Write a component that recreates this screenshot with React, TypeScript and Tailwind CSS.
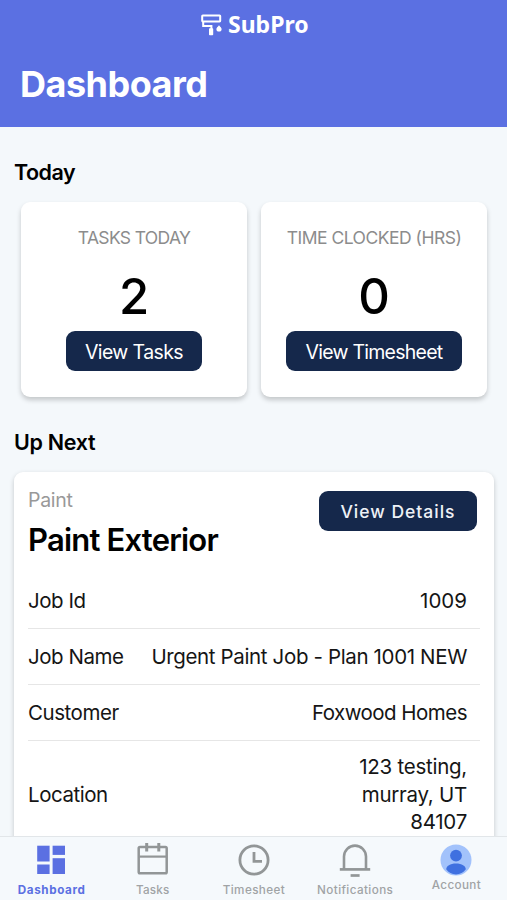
import type { ReactNode } from "react";

interface Stat {
  label: string;
  value: string;
  action: string;
  labelClass: string;
  buttonClass: string;
}

const stats: Stat[] = [
  {
    label: "TASKS TODAY",
    value: "2",
    action: "View Tasks",
    labelClass: "tracking-[-0.65px]",
    buttonClass: "w-[136px] tracking-[-0.6px]",
  },
  {
    label: "TIME CLOCKED (HRS)",
    value: "0",
    action: "View Timesheet",
    labelClass: "tracking-[-0.5px]",
    buttonClass: "w-[176px] tracking-[-0.75px]",
  },
];

const details = [
  { label: "Job Id", lines: ["1009"], valueClass: "tracking-[0px]", rowClass: "pt-[14px]" },
  {
    label: "Job Name",
    lines: ["Urgent Paint Job - Plan 1001 NEW"],
    valueClass: "tracking-[-0.36px]",
    rowClass: "pt-[14px]",
  },
  { label: "Customer", lines: ["Foxwood Homes"], valueClass: "tracking-[-0.52px]", rowClass: "pt-[14px]" },
  {
    label: "Location",
    lines: ["123 testing,", "murray, UT", "84107"],
    valueClass: "tracking-[-0.25px]",
    rowClass: "pt-[12px]",
  },
];

function RollerIcon() {
  return (
    <svg width="21" height="22" viewBox="0 0 21 22" fill="none" stroke="white" strokeWidth="2">
      <rect x="1.2" y="1.4" width="18" height="6" rx="0.6" />
      <path d="M2.2 7.5v4.6h8.2v3" />
      <rect x="8" y="14.2" width="4.2" height="7" rx="0.8" fill="white" stroke="none" />
      <path d="M18 11.2c1.4 1.7 2.6 2.6 2.6 3.8a2.6 2.6 0 0 1-5.2 0c0-1.2 1.2-2.1 2.6-3.8z" fill="white" stroke="none" />
    </svg>
  );
}

function DashboardIcon() {
  return (
    <svg width="34" height="34" viewBox="0 0 34 34" fill="#5b70e2">
      <rect x="2.2" y="2.7" width="12.4" height="15.8" />
      <rect x="17.6" y="2.7" width="12.4" height="9.2" />
      <rect x="2.2" y="21.5" width="12.4" height="9.5" />
      <rect x="17.6" y="15.2" width="12.4" height="15.8" />
    </svg>
  );
}

function CalendarIcon() {
  return (
    <svg width="34" height="34" viewBox="0 0 34 34" fill="none" stroke="#929697">
      <rect x="2.7" y="4" width="28" height="26.2" rx="1.3" strokeWidth="2.5" />
      <path d="M2.7 13.6h28" strokeWidth="2.2" />
      <path d="M10.7 0v8.6M22.8 0v8.6" strokeWidth="3" />
    </svg>
  );
}

function ClockIcon() {
  return (
    <svg width="34" height="34" viewBox="0 0 34 34" fill="none" stroke="#929697" strokeWidth="2.8">
      <circle cx="17" cy="17" r="14.1" />
      <path d="M17 9v9.4h8" />
    </svg>
  );
}

function BellIcon() {
  return (
    <svg width="34" height="34" viewBox="0 0 34 34" fill="none" stroke="#929697">
      <path d="M6 26V13.6a11 11 0 0 1 22 0V26" strokeWidth="2.6" />
      <path d="M1.8 26.4h30.4" strokeWidth="2.7" />
      <path d="M12.6 32.5h9" strokeWidth="2.7" />
    </svg>
  );
}

function AccountIcon() {
  return (
    <svg width="34" height="34" viewBox="0 0 34 34">
      <circle cx="17" cy="17" r="15.5" fill="#a2c2fb" />
      <circle cx="17" cy="12.6" r="5.9" fill="#3f70e0" />
      <path d="M7.2 26.300c0-3.500 4-5.900 9.800-5.900s9.800 2.400 9.800 5.900c-2.200 3.300-5.800 5.200-9.800 5.200s-7.600-1.900-9.800-5.200z" fill="#3f70e0" />
    </svg>
  );
}

interface Tab {
  label: string;
  icon: ReactNode;
  className: string;
  labelClass: string;
}

const tabs: Tab[] = [
  {
    label: "Dashboard",
    icon: <DashboardIcon />,
    className: "font-bold text-[#5b70e2]",
    labelClass: "mt-[5px] tracking-[0.6px]",
  },
  {
    label: "Tasks",
    icon: <CalendarIcon />,
    className: "font-medium text-[#a0a3a5]",
    labelClass: "mt-[5px] tracking-[0.2px]",
  },
  {
    label: "Timesheet",
    icon: <ClockIcon />,
    className: "font-medium text-[#a0a3a5]",
    labelClass: "mt-[5px] tracking-[0.4px]",
  },
  {
    label: "Notifications",
    icon: <BellIcon />,
    className: "font-medium text-[#a0a3a5]",
    labelClass: "mt-[5px] tracking-[0.4px]",
  },
  {
    label: "Account",
    icon: <AccountIcon />,
    className: "font-medium text-[#a0a3a5]",
    labelClass: "tracking-[0.35px]",
  },
];

function StatCard({ stat }: { stat: Stat }) {
  return (
    <div className="flex h-[195px] flex-1 flex-col items-center rounded-[9px] bg-white pt-[24px] shadow-[0_3px_5px_rgba(0,0,0,0.2)]">
      <div className={`text-[17.5px] leading-[24px] whitespace-nowrap text-[#8c8c8c] ${stat.labelClass}`}>
        {stat.label}
      </div>
      <div className="mt-[17px] text-[49px] leading-[60px] [font-weight:450]">{stat.value}</div>
      <button
        className={`mt-[4px] h-[40px] rounded-[9px] bg-[#15284b] pt-[3px] text-[19.5px] whitespace-nowrap text-white ${stat.buttonClass}`}
      >
        {stat.action}
      </button>
    </div>
  );
}

export default function App() {
  return (
    <div className="flex h-[900px] w-[507px] flex-col overflow-hidden bg-[#f4f8fb] font-['Inter',sans-serif] text-black">
      <header className="h-[127px] shrink-0 bg-[#5b70e2] text-white">
        <div className="flex h-[50px] items-center gap-[6px] pl-[201px]">
          <RollerIcon />
          <span className="-mt-[2px] font-['Noto_Sans',sans-serif] text-[23px] leading-[30px] font-bold">SubPro</span>
        </div>
        <h1 className="pl-[20px] text-[36px] leading-[68px] font-bold tracking-[-0.5px]">Dashboard</h1>
      </header>

      <main className="min-h-0 flex-1 overflow-hidden">
        <h2 className="pt-[30px] pl-[14px] text-[21.5px] leading-[30px] font-semibold tracking-[-0.5px]">Today</h2>
        <div className="mt-[15px] flex gap-[14px] pr-[20px] pl-[21px]">
          {stats.map((stat) => (
            <StatCard key={stat.label} stat={stat} />
          ))}
        </div>

        <h2 className="mt-[30px] pl-[14px] text-[21.5px] leading-[30px] font-semibold tracking-[-0.3px]">Up Next</h2>
        <section className="mt-[15px] mr-[13px] ml-[14px] h-[420px] rounded-[9px] bg-white shadow-[0_2px_5px_rgba(0,0,0,0.2)]">
          <div className="flex h-[101px] justify-between pr-[17px] pl-[14px]">
            <div className="pt-[16px]">
              <div className="text-[19.5px] leading-[24px] tracking-[-0.3px] text-[#999]">Paint</div>
              <h3 className="mt-[8px] text-[31px] leading-[40px] font-semibold tracking-[-0.8px]">Paint Exterior</h3>
            </div>
            <button className="mt-[19px] h-[40px] w-[158px] rounded-[9px] bg-[#15284b] pt-[2px] text-[17.5px] tracking-[1px] text-[#eef1f6] [font-weight:450]">
              View Details
            </button>
          </div>
          <dl className="ml-[14px] w-[452px] text-[20.5px] leading-[27.5px] tracking-[-0.45px] text-[#151515]">
            {details.map((row) => (
              <div
                key={row.label}
                className={`flex items-center justify-between border-b border-[#e6e6e6] pr-[13px] pb-[13.5px] ${row.rowClass}`}
              >
                <dt>{row.label}</dt>
                <dd className={`text-right whitespace-nowrap ${row.valueClass}`}>
                  {row.lines.map((line) => (
                    <div key={line}>{line}</div>
                  ))}
                </dd>
              </div>
            ))}
          </dl>
        </section>
      </main>

      <nav className="grid h-[64px] shrink-0 grid-cols-5 border-t border-[#e2e6e9] bg-[#f5f9fc] pl-[1px]">
        {tabs.map((tab) => (
          <div
            key={tab.label}
            className={`flex flex-col items-center pt-[6px] text-[11.7px] leading-[16px] ${tab.className}`}
          >
            {tab.icon}
            <span className={tab.labelClass}>{tab.label}</span>
          </div>
        ))}
      </nav>
    </div>
  );
}
